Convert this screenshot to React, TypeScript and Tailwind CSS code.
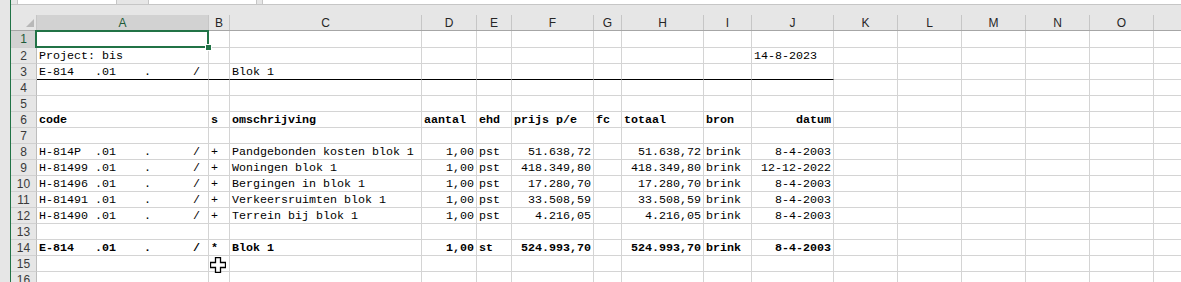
import React from 'react';

type Cell = { t: string; right?: boolean; bold?: boolean };
type Row = { n: number; h: string; cells: Record<string, Cell>; underline?: boolean };

const cols: { key: string; w: string }[] = [
  { key: 'A', w: 'w-[172px]' },
  { key: 'B', w: 'w-[21px]' },
  { key: 'C', w: 'w-[192px]' },
  { key: 'D', w: 'w-[55px]' },
  { key: 'E', w: 'w-[35px]' },
  { key: 'F', w: 'w-[82px]' },
  { key: 'G', w: 'w-[28px]' },
  { key: 'H', w: 'w-[82px]' },
  { key: 'I', w: 'w-[48px]' },
  { key: 'J', w: 'w-[82px]' },
  { key: 'K', w: 'w-[64px]' },
  { key: 'L', w: 'w-[64px]' },
  { key: 'M', w: 'w-[64px]' },
  { key: 'N', w: 'w-[64px]' },
  { key: 'O', w: 'w-[64px]' },
  { key: '', w: 'w-[40px]' },
];

const line = (code: string, desc: string, prijs: string, datum: string, bold = false, ehd = 'pst') => ({
  A: { t: code, bold },
  B: { t: bold ? '*' : '+', bold },
  C: { t: desc, bold },
  D: { t: '1,00', right: true, bold },
  E: { t: ehd, bold },
  F: { t: prijs, right: true, bold },
  H: { t: prijs, right: true, bold },
  I: { t: 'brink', bold },
  J: { t: datum, right: true, bold },
});

const rows: Row[] = [
  { n: 1, h: 'h-[17px]', cells: {} },
  { n: 2, h: 'h-[16px]', cells: { A: { t: 'Project: bis' }, J: { t: '14-8-2023' } } },
  { n: 3, h: 'h-[16px]', underline: true, cells: { A: { t: 'E-814   .01    .      /' }, C: { t: 'Blok 1' } } },
  { n: 4, h: 'h-[16px]', cells: {} },
  { n: 5, h: 'h-[16px]', cells: {} },
  {
    n: 6,
    h: 'h-[16px]',
    cells: {
      A: { t: 'code', bold: true },
      B: { t: 's', bold: true },
      C: { t: 'omschrijving', bold: true },
      D: { t: 'aantal', bold: true },
      E: { t: 'ehd', bold: true },
      F: { t: 'prijs p/e', bold: true },
      G: { t: 'fc', bold: true },
      H: { t: 'totaal', bold: true },
      I: { t: 'bron', bold: true },
      J: { t: 'datum', right: true, bold: true },
    },
  },
  { n: 7, h: 'h-[16px]', cells: {} },
  { n: 8, h: 'h-[16px]', cells: line('H-814P  .01    .      /', 'Pandgebonden kosten blok 1', '51.638,72', '8-4-2003') },
  { n: 9, h: 'h-[16px]', cells: line('H-81499 .01    .      /', 'Woningen blok 1', '418.349,80', '12-12-2022') },
  { n: 10, h: 'h-[16px]', cells: line('H-81496 .01    .      /', 'Bergingen in blok 1', '17.280,70', '8-4-2003') },
  { n: 11, h: 'h-[16px]', cells: line('H-81491 .01    .      /', 'Verkeersruimten blok 1', '33.508,59', '8-4-2003') },
  { n: 12, h: 'h-[16px]', cells: line('H-81490 .01    .      /', 'Terrein bij blok 1', '4.216,05', '8-4-2003') },
  { n: 13, h: 'h-[16px]', cells: {} },
  { n: 14, h: 'h-[16px]', cells: line('E-814   .01    .      /', 'Blok 1', '524.993,70', '8-4-2003', true, 'st') },
  { n: 15, h: 'h-[16px]', cells: {} },
  { n: 16, h: 'h-[16px]', cells: {} },
];

const underlined = ['A', 'B', 'C', 'D', 'E', 'F', 'G', 'H', 'I', 'J'];

export default function App() {
  return (
    <div className="relative w-[1181px] h-[282px] overflow-hidden bg-white flex font-['Liberation_Sans',sans-serif]">
      <div className="w-[10px] shrink-0 bg-[#e6e6e6]" />
      <div className="w-px shrink-0 bg-[#217346]" />
      <div className="flex flex-col flex-1 min-w-0">
        {/* top strip */}
        <div className="h-[5px] shrink-0 flex bg-[#e6e6e6] border-b border-[#c6c6c6]">
          <div className="w-[6px]" />
          <div className="w-[100px] bg-white border-x border-[#c6c6c6]" />
          <div className="w-[31px]" />
          <div className="w-[109px] bg-white border-x border-[#c6c6c6]" />
          <div className="w-[5px]" />
          <div className="flex-1 bg-white border-l border-[#c6c6c6]" />
        </div>
        <div className="h-[10px] shrink-0 bg-[#e6e6e6]" />

        {/* column headers */}
        <div className="h-[16px] shrink-0 flex bg-[#e6e6e6] border-b border-[#a6a6a6]">
          <div className="w-[26px] shrink-0 relative border-r border-[#c6c6c6]">
            <svg className="absolute left-[15px] top-[4px]" width="8" height="8" viewBox="0 0 8 8">
              <polygon points="8,0 8,8 0,8" fill="#b8b8b8" />
            </svg>
          </div>
          {cols.map((c) => (
            <div
              key={c.key}
              className={`${c.w} shrink-0 border-r border-[#c6c6c6] flex items-center justify-center text-[12px] leading-none ${
                c.key === 'A' ? 'bg-[#d2d2d2] text-[#1d5b38]' : 'text-[#262626]'
              }`}
            >
              {c.key}
            </div>
          ))}
        </div>

        {/* rows */}
        {rows.map((r) => (
          <div key={r.n} className={`${r.h} shrink-0 flex`}>
            <div
              className={`w-[26px] shrink-0 border-r border-b border-r-[#bdbdbd] border-b-[#d0d0d0] flex items-center justify-center text-[12px] leading-none ${
                r.n === 1 ? 'bg-[#d2d2d2] text-[#1d5b38]' : 'bg-[#e6e6e6] text-[#3a3a3a]'
              }`}
            >
              {r.n}
            </div>
            {cols.map((c) => {
              const cell = r.cells[c.key];
              const black = r.underline && underlined.includes(c.key);
              return (
                <div
                  key={c.key}
                  className={`${c.w} shrink-0 border-r border-b border-r-[#d4d4d4] ${
                    black ? 'border-b-black' : 'border-b-[#d4d4d4]'
                  } flex items-end px-[2px] ${cell?.right ? 'justify-end' : 'justify-start'}`}
                >
                  {cell && (
                    <span
                      className={`whitespace-pre text-[11.67px] leading-[13px] text-black font-['Liberation_Mono',monospace] ${
                        cell.bold ? 'font-bold' : ''
                      }`}
                    >
                      {cell.t}
                    </span>
                  )}
                </div>
              );
            })}
          </div>
        ))}
      </div>

      {/* active cell selection */}
      <div className="absolute left-[35px] top-[30px] w-[174px] h-[18px] border-2 border-[#217346]" />
      <div className="absolute left-[205px] top-[44px] w-[7px] h-[7px] bg-[#217346] border border-white" />

      {/* fat cross cursor */}
      <svg className="absolute left-[210px] top-[257px]" width="16" height="16" viewBox="0 0 16 16">
        <polygon
          points="5.5,0.5 10.5,0.5 10.5,5.5 15.5,5.5 15.5,10.5 10.5,10.5 10.5,15.5 5.5,15.5 5.5,10.5 0.5,10.5 0.5,5.5 5.5,5.5"
          fill="white"
          stroke="black"
          strokeWidth="1.3"
        />
      </svg>
    </div>
  );
}
